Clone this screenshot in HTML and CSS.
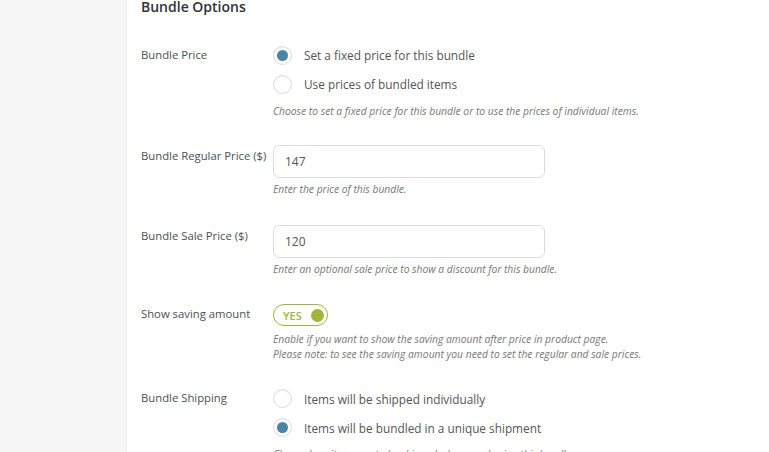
FILE: index.html
```html
<!DOCTYPE html>
<html>
<head>
<meta charset="utf-8">
<link rel="stylesheet" href="styles.css">
</head>
<body>
<div class="layout">
  <aside class="sidebar"></aside>
  <main class="main">
    <h2 class="title">Bundle Options</h2>
    <div class="rows">
      <div class="row row-radio">
        <div class="label">Bundle Price</div>
        <div class="field">
          <label class="radio"><span class="dot on"></span><span>Set a fixed price for this bundle</span></label>
          <label class="radio"><span class="dot"></span><span>Use prices of bundled items</span></label>
          <p class="desc">Choose to set a fixed price for this bundle or to use the prices of individual items.</p>
        </div>
      </div>
      <div class="row row-input">
        <div class="label">Bundle Regular Price ($)</div>
        <div class="field">
          <div class="input">147</div>
          <p class="desc">Enter the price of this bundle.</p>
        </div>
      </div>
      <div class="row row-input">
        <div class="label">Bundle Sale Price ($)</div>
        <div class="field">
          <div class="input">120</div>
          <p class="desc">Enter an optional sale price to show a discount for this bundle.</p>
        </div>
      </div>
      <div class="row row-toggle">
        <div class="label">Show saving amount</div>
        <div class="field">
          <div class="toggle"><span class="yes">YES</span><span class="knob"></span></div>
          <p class="desc">Enable if you want to show the saving amount after price in product page.<br>Please note: to see the saving amount you need to set the regular and sale prices.</p>
        </div>
      </div>
      <div class="row row-radio">
        <div class="label">Bundle Shipping</div>
        <div class="field">
          <label class="radio"><span class="dot"></span><span>Items will be shipped individually</span></label>
          <label class="radio"><span class="dot on"></span><span>Items will be bundled in a unique shipment</span></label>
          <p class="desc">Choose how items are to be shipped when purchasing this bundle.</p>
        </div>
      </div>
    </div>
  </main>
</div>
</body>
</html>
```
FILE: styles.css
```css
html, body {
  margin: 0;
  padding: 0;
  background: #fff;
  overflow: hidden;
  height: 452px;
}
body {
  font-family: "Open Sans", "Noto Sans", sans-serif;
  color: #444;
}
.layout {
  display: flex;
  height: 452px;
}
.sidebar {
  width: 126px;
  flex: none;
  background: #f7f7f7;
  border-right: 1px solid #efefef;
}
.main {
  flex: 1;
  padding-left: 14px;
}
.title {
  margin: -4px 0 0;
  font-size: 14px;
  font-weight: 600;
  color: #2c3338;
  line-height: 22px;
}
.rows {
  margin-top: 22.5px;
}
.row {
  display: grid;
  grid-template-columns: 132px 1fr;
  align-items: start;
}
.label {
  font-size: 11.3px;
  font-weight: 500;
  color: #4a4f55;
  line-height: 16px;
  padding-top: 3px;
}
.field {
  display: flex;
  flex-direction: column;
  align-items: flex-start;
}
.radio {
  display: flex;
  align-items: center;
  gap: 12px;
  height: 29px;
  font-size: 11.8px;
  color: #555;
}
.row-radio .label { padding-top: 6px; }
.dot {
  width: 17px;
  height: 17px;
  border: 1px solid #dcdcdc;
  border-radius: 50%;
  background: #fff;
  display: flex;
  align-items: center;
  justify-content: center;
  box-shadow: inset 0 1px 2px rgba(0,0,0,0.05);
}
.dot.on::after {
  content: "";
  width: 11px;
  height: 11px;
  border-radius: 50%;
  background: #4a86a3;
}
.desc {
  margin: 5px 0 0;
  font-size: 10.3px;
  font-style: italic;
  color: #777;
  line-height: 15px;
}
.row-radio { margin-bottom: 26.5px; }
.row-input { margin-bottom: 28px; }
.input {
  width: 259px;
  height: 31px;
  border: 1px solid #dddddd;
  border-radius: 6px;
  padding: 0 0 0 11px;
  display: flex;
  align-items: center;
  font-size: 12px;
  color: #555;
}
.row-input .desc { margin-top: 4px; }
.row-toggle { margin-bottom: 22px; }
.row-toggle .label { padding-top: 1px; }
.toggle {
  height: 20px;
  width: 41px;
  border: 1px solid #a2b43c;
  border-radius: 12px;
  display: flex;
  align-items: center;
  justify-content: space-between;
  padding: 0 3px 0 9px;
  margin-top: -1px;
}
.yes {
  font-size: 11px;
  font-weight: 600;
  color: #a2b43c;
}
.knob {
  width: 13px;
  height: 13px;
  border-radius: 50%;
  background: #a2b43c;
}
.row-toggle .desc { margin-top: 6px; }
```
